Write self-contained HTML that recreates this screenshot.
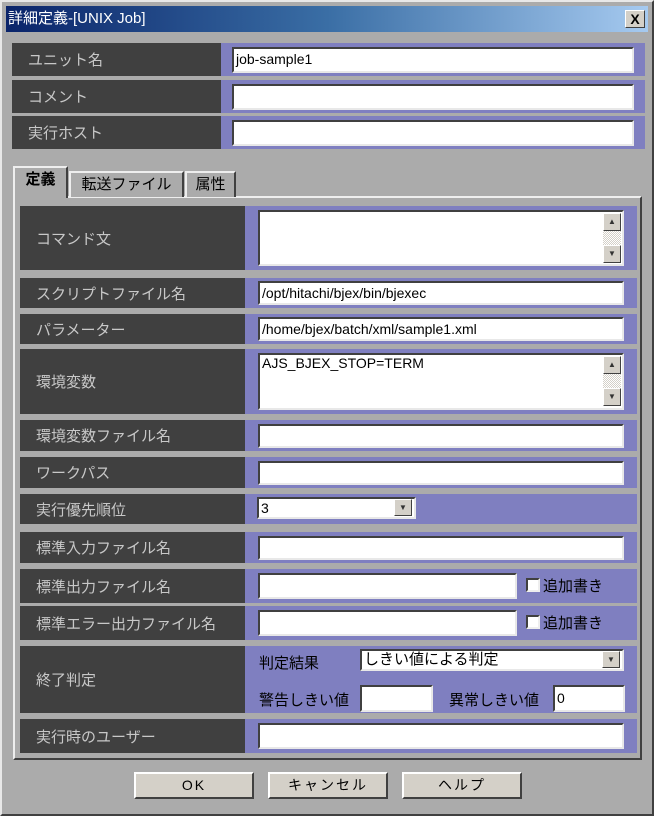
<!DOCTYPE html>
<html><head><meta charset="utf-8"><style>
*{box-sizing:border-box;margin:0;padding:0}
body{width:654px;height:816px;background:#fff;position:relative;overflow:hidden;font-family:"Liberation Sans","Noto Sans CJK JP",sans-serif;font-size:14px}
.a{position:absolute}
.win{left:0;top:0;width:654px;height:816px;background:#ababab;border:2px solid #e8e8e8;border-right-color:#404040;border-bottom-color:#404040}
.title{left:6px;top:6px;width:642px;height:26px;background:linear-gradient(90deg,#0a246a,#3a6ea5 50%,#a6caf0);color:#fff;font-size:15px;line-height:26px;padding-left:2px}
.close{left:625px;top:10px;width:20px;height:18px;background:#d4d0c8;border:1px solid #fff;border-right-color:#404040;border-bottom-color:#404040;color:#000;font-weight:bold;text-align:center;line-height:16px;font-size:14px}
.lab{background:#404040;color:#c8c8c8;padding-left:16px;display:flex;align-items:center;font-size:15px}
.pur{background:#7f7fc0}
.in{background:#fff;border:2px solid #404040;border-right-color:#e8e8e8;border-bottom-color:#e8e8e8;font-size:14px;padding-left:2px;line-height:20px;color:#000}
.sb{width:18px;height:18px;background:#d4d0c8;border:1px solid #fff;border-right-color:#404040;border-bottom-color:#404040;font-size:8px;text-align:center;line-height:16px;color:#333}
.btn{background:#d4d0c8;border:2px solid #fff;border-right-color:#404040;border-bottom-color:#404040;text-align:center;line-height:22px;font-size:14px;color:#000;letter-spacing:2px}
.tab{background:#ababab;border:2px solid #eee;border-bottom:none;border-right-color:#404040;text-align:center;font-size:15px;line-height:24px}
.cb{width:14px;height:14px;background:#fff;border:2px solid #404040;border-right-color:#eee;border-bottom-color:#eee}
.dt{width:18px;background:repeating-conic-gradient(#d4d0c8 0 25%,#fff 0 50%) 0 0/2px 2px}
</style></head><body>
<div class="a win"></div>
<div class="a title">詳細定義-[UNIX Job]</div>
<div class="a close">X</div>

<div class="a lab" style="left:12px;top:43px;width:209px;height:33px">ユニット名</div>
<div class="a pur" style="left:221px;top:43px;width:424px;height:33px"></div>
<div class="a in" style="left:232px;top:47px;width:402px;height:26px">job-sample1</div>
<div class="a lab" style="left:12px;top:80px;width:209px;height:33px">コメント</div>
<div class="a pur" style="left:221px;top:80px;width:424px;height:33px"></div>
<div class="a in" style="left:232px;top:84px;width:402px;height:26px"></div>
<div class="a lab" style="left:12px;top:116px;width:209px;height:33px">実行ホスト</div>
<div class="a pur" style="left:221px;top:116px;width:424px;height:33px"></div>
<div class="a in" style="left:232px;top:120px;width:402px;height:26px"></div>

<div class="a" style="left:13px;top:196px;width:629px;height:564px;border:2px solid #eee;border-right-color:#404040;border-bottom-color:#404040"></div>
<div class="a tab" style="left:13px;top:166px;width:55px;height:32px;font-weight:bold;background:#ababab;z-index:2">定義</div>
<div class="a tab" style="left:69px;top:171px;width:115px;height:26px">転送ファイル</div>
<div class="a tab" style="left:185px;top:171px;width:51px;height:26px">属性</div>

<div class="a lab" style="left:20px;top:206px;width:225px;height:64px">コマンド文</div>
<div class="a pur" style="left:245px;top:206px;width:392px;height:64px"></div>
<div class="a in" style="left:258px;top:210px;width:366px;height:56px"></div>
<div class="a dt" style="left:603px;top:231px;height:14px"></div>
<div class="a sb" style="left:603px;top:213px">▲</div>
<div class="a sb" style="left:603px;top:245px">▼</div>

<div class="a lab" style="left:20px;top:278px;width:225px;height:30px">スクリプトファイル名</div>
<div class="a pur" style="left:245px;top:278px;width:392px;height:30px"></div>
<div class="a in" style="left:258px;top:281px;width:366px;height:24px">/opt/hitachi/bjex/bin/bjexec</div>

<div class="a lab" style="left:20px;top:314px;width:225px;height:30px">パラメーター</div>
<div class="a pur" style="left:245px;top:314px;width:392px;height:30px"></div>
<div class="a in" style="left:258px;top:317px;width:366px;height:24px">/home/bjex/batch/xml/sample1.xml</div>

<div class="a lab" style="left:20px;top:349px;width:225px;height:65px">環境変数</div>
<div class="a pur" style="left:245px;top:349px;width:392px;height:65px"></div>
<div class="a in" style="left:258px;top:353px;width:366px;height:57px;line-height:16px">AJS_BJEX_STOP=TERM</div>
<div class="a dt" style="left:603px;top:374px;height:14px"></div>
<div class="a sb" style="left:603px;top:356px">▲</div>
<div class="a sb" style="left:603px;top:388px">▼</div>

<div class="a lab" style="left:20px;top:420px;width:225px;height:31px">環境変数ファイル名</div>
<div class="a pur" style="left:245px;top:420px;width:392px;height:31px"></div>
<div class="a in" style="left:258px;top:424px;width:366px;height:24px"></div>

<div class="a lab" style="left:20px;top:457px;width:225px;height:31px">ワークパス</div>
<div class="a pur" style="left:245px;top:457px;width:392px;height:31px"></div>
<div class="a in" style="left:258px;top:461px;width:366px;height:24px"></div>

<div class="a lab" style="left:20px;top:494px;width:225px;height:30px">実行優先順位</div>
<div class="a pur" style="left:245px;top:494px;width:392px;height:30px"></div>
<div class="a in" style="left:257px;top:497px;width:159px;height:22px;line-height:18px">3</div>
<div class="a sb" style="left:394px;top:499px;height:17px">▼</div>

<div class="a lab" style="left:20px;top:532px;width:225px;height:31px">標準入力ファイル名</div>
<div class="a pur" style="left:245px;top:532px;width:392px;height:31px"></div>
<div class="a in" style="left:258px;top:536px;width:366px;height:24px"></div>

<div class="a lab" style="left:20px;top:569px;width:225px;height:34px">標準出力ファイル名</div>
<div class="a pur" style="left:245px;top:569px;width:392px;height:34px"></div>
<div class="a in" style="left:258px;top:573px;width:259px;height:26px"></div>
<div class="a cb" style="left:526px;top:578px"></div>
<div class="a" style="left:543px;top:575px;font-size:15px">追加書き</div>

<div class="a lab" style="left:20px;top:606px;width:225px;height:34px">標準エラー出力ファイル名</div>
<div class="a pur" style="left:245px;top:606px;width:392px;height:34px"></div>
<div class="a in" style="left:258px;top:610px;width:259px;height:26px"></div>
<div class="a cb" style="left:526px;top:615px"></div>
<div class="a" style="left:543px;top:612px;font-size:15px">追加書き</div>

<div class="a lab" style="left:20px;top:646px;width:225px;height:67px">終了判定</div>
<div class="a pur" style="left:245px;top:646px;width:392px;height:67px"></div>
<div class="a" style="left:259px;top:652px;font-size:15px">判定結果</div>
<div class="a in" style="left:360px;top:649px;width:264px;height:22px;line-height:18px;font-size:15px">しきい値による判定</div>
<div class="a sb" style="left:602px;top:651px;height:17px">▼</div>
<div class="a" style="left:259px;top:689px;font-size:15px">警告しきい値</div>
<div class="a in" style="left:360px;top:685px;width:73px;height:27px"></div>
<div class="a" style="left:449px;top:689px;font-size:15px">異常しきい値</div>
<div class="a in" style="left:553px;top:685px;width:72px;height:27px;line-height:22px">0</div>

<div class="a lab" style="left:20px;top:719px;width:225px;height:34px">実行時のユーザー</div>
<div class="a pur" style="left:245px;top:719px;width:392px;height:34px"></div>
<div class="a in" style="left:258px;top:723px;width:366px;height:26px"></div>

<div class="a btn" style="left:134px;top:772px;width:120px;height:27px">OK</div>
<div class="a btn" style="left:268px;top:772px;width:120px;height:27px">キャンセル</div>
<div class="a btn" style="left:402px;top:772px;width:120px;height:27px">ヘルプ</div>
</body></html>
